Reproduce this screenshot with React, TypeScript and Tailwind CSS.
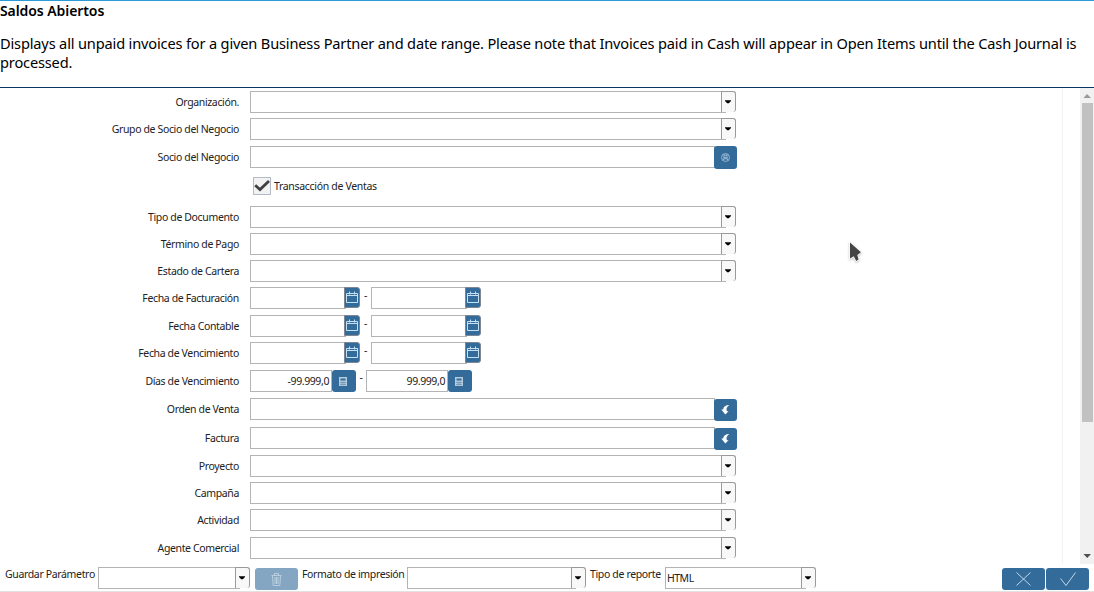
import React from 'react';

type Kind = 'combo' | 'partner' | 'check' | 'dates' | 'numbers' | 'lookup';

interface Field {
  label: string;
  kind: Kind;
  row: string;
}

const fields: Field[] = [
  { label: 'Organización.', kind: 'combo', row: 'h-[27px]' },
  { label: 'Grupo de Socio del Negocio', kind: 'combo', row: 'h-[28px]' },
  { label: 'Socio del Negocio', kind: 'partner', row: 'h-[31px]' },
  { label: 'Transacción de Ventas', kind: 'check', row: 'h-[29px]' },
  { label: 'Tipo de Documento', kind: 'combo', row: 'h-[27px]' },
  { label: 'Término de Pago', kind: 'combo', row: 'h-[27px]' },
  { label: 'Estado de Cartera', kind: 'combo', row: 'h-[27px]' },
  { label: 'Fecha de Facturación', kind: 'dates', row: 'h-[28px]' },
  { label: 'Fecha Contable', kind: 'dates', row: 'h-[27px]' },
  { label: 'Fecha de Vencimiento', kind: 'dates', row: 'h-[28px]' },
  { label: 'Días de Vencimiento', kind: 'numbers', row: 'h-[28px]' },
  { label: 'Orden de Venta', kind: 'lookup', row: 'h-[29px]' },
  { label: 'Factura', kind: 'lookup', row: 'h-[28px]' },
  { label: 'Proyecto', kind: 'combo', row: 'h-[27px]' },
  { label: 'Campaña', kind: 'combo', row: 'h-[27px]' },
  { label: 'Actividad', kind: 'combo', row: 'h-[28px]' },
  { label: 'Agente Comercial', kind: 'combo', row: 'h-[22px]' },
];

function Box({ width, children }: { width: string; children?: React.ReactNode }) {
  return (
    <div className={`h-[22px] shrink-0 border border-[#b4b4b4] bg-white leading-[20px] whitespace-nowrap ${width}`}>
      {children}
    </div>
  );
}

function Combo({ width, value }: { width: string; value?: string }) {
  return (
    <div className="flex">
      <Box width={width}>
        <span className="pl-px tracking-[-0.5px]">{value}</span>
      </Box>
      <div className="z-10 -ml-[5px] flex h-[21px] w-[15px] items-center justify-center rounded-r-[3px] border border-b-0 border-[#9a9a9a] bg-[#f8f8f8] pr-px">
        <svg width="6" height="4" viewBox="0 0 6 4">
          <path d="M0 0.3h6v0.7L3.8 3.2H2.2L0 1z" fill="#000" />
        </svg>
      </div>
    </div>
  );
}

function CalendarField() {
  return (
    <div className="flex">
      <Box width="w-[96px]" />
      <div className="z-10 -ml-[2px] flex h-[21px] w-[16px] items-center justify-center rounded-r-[3px] border border-[#7c8793] bg-[#336b9b]">
        <svg width="12" height="13" viewBox="0 0 12 13" fill="none" stroke="#c5e2f5" className="-mt-px -ml-px">
          <path d="M0.5 2.5h11v9h-11zM0.5 4.5h11M3.5 0.5v3M8.5 0.5v3" />
        </svg>
      </div>
    </div>
  );
}

function NumberField({ value }: { value: string }) {
  return (
    <div className="flex">
      <Box width="w-[82px] text-right pr-[2px] tracking-[-0.4px]">{value}</Box>
      <div className="flex h-[22px] w-[24px] items-center justify-center rounded-[3px] bg-[#336b9b]">
        <svg width="8" height="10" viewBox="0 0 8 10" className="-ml-[2px] mt-px">
          <path d="M0 0h8v9H0z" fill="#b4cbdd" />
          <path d="M1.5 1.5h5v2h-5z" fill="#336b9b" />
          <path d="M1 5.5h6M1 7.5h6M3 4.5v4M5 4.5v4" stroke="#5b89b0" strokeWidth="0.6" />
        </svg>
      </div>
    </div>
  );
}

function Control({ kind, label }: { kind: Kind; label: string }) {
  switch (kind) {
    case 'combo':
      return <Combo width="w-[476px]" />;
    case 'partner':
      return (
        <div className="flex">
          <Box width="w-[465px]" />
          <div className="-ml-px flex h-[23px] w-[23px] items-center justify-center rounded-[3px] bg-[#336b9b]">
            <svg width="9" height="9" viewBox="0 0 10 10" fill="none" stroke="#a9c6dc" strokeWidth="0.9">
              <circle cx="5" cy="5" r="4.4" />
              <path d="M3.3 1.5v5.5M6.7 1.5v5.5M3.3 2.5h3.4M3.3 5h3.4M2 8l1.6-1.6h2.8L8 8" />
            </svg>
          </div>
        </div>
      );
    case 'lookup':
      return (
        <div className="flex">
          <Box width="w-[465px]" />
          <div className="-ml-px mt-px flex h-[22px] w-[23px] items-center justify-center rounded-[3px] bg-[#336b9b]">
            <svg width="9" height="10" viewBox="0 0 9 10" className="-mt-px">
              <path d="M8.3 0C4.6 0 2.4 1.6 2.2 4.6H0.3L4.3 9.6 7.6 6.2H5.9C4.9 4 5.7 1.7 8.3 0z" fill="#fff" />
            </svg>
          </div>
        </div>
      );
    case 'check':
      return (
        <div className="flex pl-[3px]">
          <div className="h-[18px] w-[18px] border border-[#b5bac8] bg-[#f2f2f3]">
            <svg width="16" height="16" viewBox="0 0 16 16">
              <path d="M1.2 7.3L6 11.6 15 3" fill="none" stroke="#404040" strokeWidth="2.8" />
            </svg>
          </div>
          <span className="pl-[3px] leading-[18px] tracking-[-0.32px]">{label}</span>
        </div>
      );
    case 'dates':
      return (
        <div className="flex">
          <CalendarField />
          <span className="w-[11px] text-center leading-[16px]">-</span>
          <CalendarField />
        </div>
      );
    case 'numbers':
      return (
        <div className="flex">
          <NumberField value="-99.999,0" />
          <span className="w-[10px] text-center leading-[14px]">-</span>
          <NumberField value="99.999,0" />
        </div>
      );
  }
}

export default function App() {
  return (
    <div className="flex h-[592px] w-[1094px] flex-col overflow-hidden border-t border-[#2a9ad8] bg-white font-['Noto_Sans',sans-serif] text-black">
      <header className="h-[87px] shrink-0 border-b border-[#0b3560] text-[14.6px] leading-[19px]">
        <h1 className="text-[14px] font-semibold tracking-[-0.08px]">Saldos Abiertos</h1>
        <p className="w-[1090px] pt-[14px] tracking-[-0.162px]">
          Displays all unpaid invoices for a given Business Partner and date range. Please note that Invoices paid in
          Cash will appear in Open Items until the Cash Journal is processed.
        </p>
      </header>

      <main className="flex h-[476px] shrink-0 text-[10.5px] tracking-[-0.36px] text-[#222]">
        <div className="w-[1063px] border-r border-[#f3f3f3] pt-[3px]">
          {fields.map((f) => (
            <div key={f.label} className={`flex items-start ${f.row}`}>
              <div className="w-[239px] text-right leading-[22px]">{f.kind === 'check' ? '' : f.label}</div>
              <div className="pl-[11px]">
                <Control kind={f.kind} label={f.label} />
              </div>
            </div>
          ))}
        </div>
        <div className="ml-[17px] flex w-[14px] flex-col items-center bg-[#f1f1f1]">
          <svg width="14" height="15" viewBox="0 0 14 15">
            <path d="M3.5 10L7 6l4 4z" fill="#999" />
          </svg>
          <div className="h-[319px] w-[11px] bg-[#c1c1c1]" />
          <svg className="mt-auto" width="14" height="16" viewBox="0 0 14 16">
            <path d="M3.5 6h7.5L7.2 10z" fill="#505050" />
          </svg>
        </div>
      </main>

      <footer className="flex h-[28px] shrink-0 items-start border-b border-[#e2e2e2] pt-[3px] pl-[5px] text-[10.5px] tracking-[-0.35px] text-[#222]">
        <span className="w-[93px] leading-[14px] whitespace-nowrap">Guardar Parámetro</span>
        <Combo width="w-[142px]" />
        <div className="ml-[5px] mt-px flex h-[22px] w-[43px] items-center justify-center rounded-[3px] bg-[#84a6c3]">
          <svg width="11" height="13" viewBox="0 0 11 13" fill="none" stroke="#b9cedf">
            <path d="M0.5 2.5h10M3.5 2V0.5h4V2M1.5 3l0.7 9.5h6.6L9.5 3M4 4v7M5.5 4v7M7 4v7" />
          </svg>
        </div>
        <span className="ml-[4px] w-[105px] leading-[14px] whitespace-nowrap">Formato de impresión</span>
        <Combo width="w-[169px]" />
        <span className="ml-[4px] w-[75px] leading-[14px] whitespace-nowrap">Tipo de reporte</span>
        <Combo width="w-[141px]" value="HTML" />
        <div className="ml-auto mr-[5px] mt-px flex gap-px">
          <div className="flex h-[22px] w-[43px] items-center justify-center rounded-[3px] bg-[#336b9b]">
            <svg width="15" height="14" viewBox="0 0 15 14" stroke="#c3d7e6">
              <path d="M0.5 0.5l14 13M14.5 0.5l-14 13" />
            </svg>
          </div>
          <div className="flex h-[22px] w-[43px] items-center justify-center rounded-[3px] bg-[#336b9b]">
            <svg width="16" height="14" viewBox="0 0 16 14" fill="none" stroke="#c3d7e6">
              <path d="M0.5 6.5l5.5 7L15.5 0.5" />
            </svg>
          </div>
        </div>
      </footer>

      <svg className="absolute top-[240px] left-[847px] z-20" width="18" height="24" viewBox="0 0 18 24">
        <path
          d="M3 2.5V18.5l3.8-2.3 2.4 4.7 2.4-1.3-1.3-4.6 3.7-2.7z"
          fill="#454545"
          stroke="#fff"
          strokeWidth="1.5"
          paintOrder="stroke"
          className="drop-shadow-[0_1px_1px_rgba(0,0,0,0.25)]"
        />
      </svg>
    </div>
  );
}
